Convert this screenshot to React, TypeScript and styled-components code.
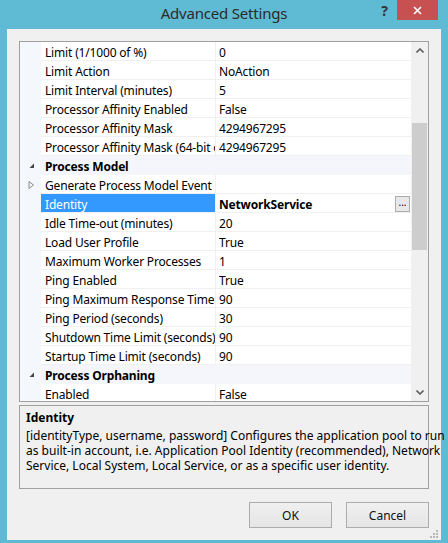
import React from "react";
import styled, { createGlobalStyle } from "styled-components";

const FONT = `"Noto Sans", "Open Sans", sans-serif`;
const TEAL = "#5fbbd4";

const GlobalStyle = createGlobalStyle`
  html, body { margin: 0; padding: 0; background: ${TEAL}; }
  body { font-family: ${FONT}; -webkit-font-smoothing: antialiased; }
  * { box-sizing: border-box; }
`;

const Window = styled.div`
  width: 448px;
  height: 543px;
  background: ${TEAL};
  display: flex;
  flex-direction: column;
  overflow: hidden;
`;

const TitleBar = styled.div`
  height: 29px;
  flex: none;
  display: grid;
  grid-template-columns: 1fr auto 1fr;
  align-items: start;
`;

const TitleText = styled.div`
  grid-column: 2;
  font-size: 15px;
  line-height: 27px;
  letter-spacing: -0.2px;
  color: #2b2b2b;
  white-space: nowrap;
`;

const Caption = styled.div`
  grid-column: 3;
  justify-self: end;
  display: flex;
  align-items: flex-start;
  margin-right: 10px;
`;

const HelpGlyph = styled.div`
  font-size: 14px;
  font-weight: 700;
  line-height: 22px;
  color: #333;
  margin-right: 9px;
`;

const CloseButton = styled.div`
  width: 41px;
  height: 20px;
  background: #c75050;
  display: flex;
  align-items: center;
  justify-content: center;
`;

const Client = styled.div`
  flex: 1;
  margin: 0 7px 3px;
  background: #f0f0f0;
  padding: 12px;
  display: flex;
  flex-direction: column;
  position: relative;
`;

const Grid = styled.div`
  height: 361px;
  flex: none;
  border: 1px solid #a0a0a0;
  background: #fff;
  display: flex;
`;

const RowsArea = styled.div`
  flex: 1;
  overflow: hidden;
  display: flex;
  flex-direction: column;
  font-size: 12px;
  letter-spacing: -0.17px;
  color: #000;
`;

const Row = styled.div`
  height: 19px;
  flex: none;
  display: flex;
`;

const Gutter = styled.div`
  width: 21px;
  flex: none;
  background: #f4f7fb;
  display: flex;
  align-items: center;
  justify-content: center;
  padding-left: 2px;
  padding-top: 1px;
`;

const NameCell = styled.div<{ $selected?: boolean }>`
  width: 175px;
  flex: none;
  border-right: 1px solid #f0f0f0;
  border-bottom: 1px solid #f0f0f0;
  padding-left: 4px;
  padding-top: 2px;
  line-height: 18px;
  white-space: nowrap;
  overflow: hidden;
  background: ${(p) => (p.$selected ? "#3399ff" : "#fff")};
  color: ${(p) => (p.$selected ? "#fff" : "#000")};
`;

const ValueCell = styled.div<{ $bold?: boolean }>`
  flex: 1;
  min-width: 0;
  display: flex;
  align-items: flex-start;
  border-bottom: 1px solid #f0f0f0;
  padding-left: 3px;
  padding-right: 1px;
  line-height: 18px;
  white-space: nowrap;
  overflow: hidden;
  font-weight: ${(p) => (p.$bold ? 700 : 400)};
`;

const ValueText = styled.span`
  flex: 1;
  overflow: hidden;
  padding-top: 2px;
`;

const EllipsisButton = styled.div`
  width: 15px;
  height: 16px;
  margin-top: 2px;
  border: 1px solid #adadad;
  background: #e8e8e8;
  font-size: 10px;
  font-weight: 400;
  letter-spacing: 0;
  line-height: 11px;
  text-align: center;
  color: #000;
`;

const CategoryRow = styled.div`
  height: 19px;
  flex: none;
  display: flex;
  background: #f4f6fb;
`;

const CategoryLabel = styled.div`
  padding-left: 4px;
  padding-top: 2px;
  font-weight: 700;
  line-height: 18px;
  white-space: nowrap;
`;

const Scrollbar = styled.div`
  width: 17px;
  flex: none;
  background: #f0f0f0;
  display: flex;
  flex-direction: column;
`;

const ArrowBox = styled.div`
  height: 17px;
  flex: none;
  display: flex;
  align-items: center;
  justify-content: center;
`;

const Track = styled.div`
  flex: 1;
  display: flex;
  flex-direction: column;
  align-items: center;
`;

const Thumb = styled.div<{ $offset: number; $size: number }>`
  width: 15px;
  margin-top: ${(p) => p.$offset}px;
  height: ${(p) => p.$size}px;
  background: #cdcdcd;
`;

const Description = styled.div`
  height: 84px;
  flex: none;
  margin-top: 3px;
  border: 1px solid #a0a0a0;
  padding: 4px 6px 0;
  font-size: 12px;
  color: #000;
`;

const DescTitle = styled.div`
  font-weight: 700;
  line-height: 16px;
`;

const DescBody = styled.div`
  margin-top: 2px;
  line-height: 15px;
`;

const DescLine = styled.div`
  white-space: nowrap;
`;

const ButtonRow = styled.div`
  margin-top: 13px;
  display: flex;
  justify-content: flex-end;
  gap: 14px;
`;

const Button = styled.button`
  width: 83px;
  height: 26px;
  border: 1px solid #acacac;
  background: linear-gradient(#f0f0f0, #e5e5e5);
  font-family: ${FONT};
  font-size: 12px;
  color: #111;
  padding: 0;
`;

const Grip = styled.svg`
  position: absolute;
  right: 3px;
  bottom: 2px;
`;

type Item =
  | { kind: "cat"; label: string }
  | {
      kind: "prop";
      name: string;
      value: string;
      expandable?: boolean;
      selected?: boolean;
      ellipsis?: boolean;
    };

const items: Item[] = [
  { kind: "prop", name: "Limit (1/1000 of %)", value: "0" },
  { kind: "prop", name: "Limit Action", value: "NoAction" },
  { kind: "prop", name: "Limit Interval (minutes)", value: "5" },
  { kind: "prop", name: "Processor Affinity Enabled", value: "False" },
  { kind: "prop", name: "Processor Affinity Mask", value: "4294967295" },
  { kind: "prop", name: "Processor Affinity Mask (64-bit option)", value: "4294967295" },
  { kind: "cat", label: "Process Model" },
  { kind: "prop", name: "Generate Process Model Event Log Entry", value: "", expandable: true },
  { kind: "prop", name: "Identity", value: "NetworkService", selected: true, ellipsis: true },
  { kind: "prop", name: "Idle Time-out (minutes)", value: "20" },
  { kind: "prop", name: "Load User Profile", value: "True" },
  { kind: "prop", name: "Maximum Worker Processes", value: "1" },
  { kind: "prop", name: "Ping Enabled", value: "True" },
  { kind: "prop", name: "Ping Maximum Response Time (seconds)", value: "90" },
  { kind: "prop", name: "Ping Period (seconds)", value: "30" },
  { kind: "prop", name: "Shutdown Time Limit (seconds)", value: "90" },
  { kind: "prop", name: "Startup Time Limit (seconds)", value: "90" },
  { kind: "cat", label: "Process Orphaning" },
  { kind: "prop", name: "Enabled", value: "False" },
];

const CollapseIcon = () => (
  <svg width="6" height="6" viewBox="0 0 6 6">
    <polygon points="5,0.5 5,5 0.5,5" fill="#454545" />
  </svg>
);

const ExpandIcon = () => (
  <svg width="7" height="8" viewBox="0 0 7 8">
    <polygon points="1,0.5 5.5,4 1,7.5" fill="none" stroke="#8a8a8a" strokeWidth="1" />
  </svg>
);

const Chevron = ({ up }: { up?: boolean }) => (
  <svg width="8" height="5" viewBox="0 0 8 5">
    <polyline
      points={up ? "0.5,4.5 4,1 7.5,4.5" : "0.5,0.5 4,4 7.5,0.5"}
      fill="none"
      stroke="#606060"
      strokeWidth="1.6"
    />
  </svg>
);

export default function App() {
  return (
    <Window>
      <GlobalStyle />
      <TitleBar>
        <TitleText>Advanced Settings</TitleText>
        <Caption>
          <HelpGlyph>?</HelpGlyph>
          <CloseButton>
            <svg width="9" height="9" viewBox="0 0 9 9">
              <path d="M1 1 L8 8 M8 1 L1 8" stroke="#fff" strokeWidth="1.6" />
            </svg>
          </CloseButton>
        </Caption>
      </TitleBar>
      <Client>
        <Grid>
          <RowsArea>
            {items.map((it, i) =>
              it.kind === "cat" ? (
                <CategoryRow key={i}>
                  <Gutter>
                    <CollapseIcon />
                  </Gutter>
                  <CategoryLabel>{it.label}</CategoryLabel>
                </CategoryRow>
              ) : (
                <Row key={i}>
                  <Gutter>{it.expandable ? <ExpandIcon /> : null}</Gutter>
                  <NameCell $selected={it.selected}>{it.name}</NameCell>
                  <ValueCell $bold={it.selected}>
                    <ValueText>{it.value}</ValueText>
                    {it.ellipsis ? <EllipsisButton>...</EllipsisButton> : null}
                  </ValueCell>
                </Row>
              )
            )}
          </RowsArea>
          <Scrollbar>
            <ArrowBox>
              <Chevron up />
            </ArrowBox>
            <Track>
              <Thumb $offset={64} $size={127} />
            </Track>
            <ArrowBox>
              <Chevron />
            </ArrowBox>
          </Scrollbar>
        </Grid>
        <Description>
          <DescTitle>Identity</DescTitle>
          <DescBody>
            <DescLine>
              [identityType, username, password] Configures the application pool to run
            </DescLine>
            <DescLine>
              as built-in account, i.e. Application Pool Identity (recommended), Network
            </DescLine>
            <DescLine>
              Service, Local System, Local Service, or as a specific user identity.
            </DescLine>
          </DescBody>
        </Description>
        <ButtonRow>
          <Button>OK</Button>
          <Button>Cancel</Button>
        </ButtonRow>
        <Grip width="8" height="8" viewBox="0 0 8 8">
          <rect x="6" y="0" width="2" height="2" fill="#b8b8b8" />
          <rect x="3" y="3" width="2" height="2" fill="#b8b8b8" />
          <rect x="6" y="3" width="2" height="2" fill="#b8b8b8" />
          <rect x="0" y="6" width="2" height="2" fill="#b8b8b8" />
          <rect x="3" y="6" width="2" height="2" fill="#b8b8b8" />
          <rect x="6" y="6" width="2" height="2" fill="#b8b8b8" />
        </Grip>
      </Client>
    </Window>
  );
}
